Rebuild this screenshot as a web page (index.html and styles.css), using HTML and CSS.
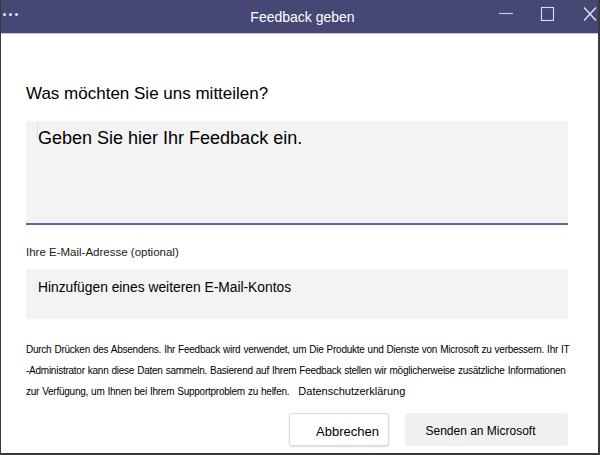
FILE: index.html
```html
<!DOCTYPE html>
<html lang="de">
<head>
<meta charset="utf-8">
<title>Feedback geben</title>
<link rel="stylesheet" href="styles.css">
</head>
<body>
<div class="window">
  <div class="titlebar">
    <div class="dots"><span></span><span></span><span></span></div>
    <div class="title">Feedback geben</div>
    <div class="controls">
      <svg class="ctl ctl-min" width="16" height="16" viewBox="0 0 16 16"><path d="M1 7.5H15" stroke="#c9c9dc" stroke-width="1.2"/></svg>
      <svg class="ctl ctl-max" width="16" height="16" viewBox="0 0 16 16"><rect x="2.5" y="1.5" width="12" height="13" fill="none" stroke="#dcdcea" stroke-width="1.1"/></svg>
      <svg class="ctl ctl-close" width="16" height="16" viewBox="0 0 16 16"><path d="M2 1.5L14 14.5M14 1.5L2 14.5" stroke="#eeeef5" stroke-width="1.2"/></svg>
    </div>
  </div>
  <div class="content">
    <h1 class="question">Was möchten Sie uns mitteilen?</h1>
    <div class="feedback-box"><span class="caret"></span>Geben Sie hier Ihr Feedback ein.</div>
    <div class="label">Ihre E-Mail-Adresse (optional)</div>
    <div class="email-box">Hinzufügen eines weiteren E-Mail-Kontos</div>
    <div class="disclaimer">
      <span class="line">Durch Drücken des Absendens. Ihr Feedback wird verwendet, um Die Produkte und Dienste von Microsoft zu verbessern. Ihr IT</span>
      <span class="line">-Administrator kann diese Daten sammeln. Basierend auf Ihrem Feedback stellen wir möglicherweise zusätzliche Informationen</span>
      <span class="line">zur Verfügung, um Ihnen bei Ihrem Supportproblem zu helfen. <span class="privacy">Datenschutzerklärung</span></span>
    </div>
    <div class="actions">
      <button class="btn btn-cancel">Abbrechen</button>
      <button class="btn btn-send">Senden an Microsoft</button>
    </div>
  </div>
</div>
</body>
</html>
```
FILE: styles.css
```css
html, body {
  margin: 0;
  padding: 0;
  background: #ffffff;
}
body {
  font-family: "Liberation Sans", Arial, sans-serif;
  color: #000;
}
.window {
  width: 600px;
  height: 455px;
  box-sizing: border-box;
  border-left: 1px solid #3a3a3a;
  border-right: 2px solid #3a3a3a;
  border-bottom: 2px solid #3a3a3a;
  display: flex;
  flex-direction: column;
  overflow: hidden;
}
.titlebar {
  height: 33px;
  background: #464775;
  border-bottom: 1px solid #c5c6dd;
  display: flex;
  align-items: flex-start;
  position: relative;
  flex-shrink: 0;
}
.dots {
  display: flex;
  gap: 3px;
  padding-left: 2px;
  margin-top: 13px;
}
.dots span {
  width: 3px;
  height: 3px;
  background: #e6e6f0;
  border-radius: 50%;
}
.title {
  position: absolute;
  left: 0;
  right: 0;
  padding-left: 6px;
  text-align: center;
  color: #ffffff;
  font-size: 14px;
  top: 9px;
}
.controls {
  margin-left: auto;
  display: flex;
  padding-top: 6px;
}
.ctl-max {
  margin-left: 25px;
}
.ctl-close {
  margin-left: 27px;
}
.content {
  padding: 0 30px 0 25px;
  display: flex;
  flex-direction: column;
}
.question {
  font-size: 17px;
  font-weight: normal;
  margin: 50px 0 0 0;
  line-height: 20px;
}
.feedback-box {
  margin-top: 17px;
  height: 104px;
  background: #f3f3f3;
  border-bottom: 2px solid #6264a7;
  border-radius: 2px 2px 0 0;
  padding: 5px 12px;
  box-sizing: border-box;
  font-size: 18px;
  line-height: 24px;
  position: relative;
}
.caret {
  position: absolute;
  left: 11px;
  top: 2px;
  width: 1px;
  height: 15px;
  background: #dedede;
}
.label {
  font-size: 11.5px;
  margin-top: 20px;
  line-height: 14px;
  color: #1a1a1a;
}
.email-box {
  margin-top: 10px;
  height: 50px;
  background: #f3f3f3;
  border-radius: 2px;
  padding: 10px 12px;
  box-sizing: border-box;
  font-size: 13.8px;
  line-height: 18px;
}
.disclaimer {
  margin: 21px -10px 0 0;
  font-size: 10px;
  line-height: 20.7px;
  letter-spacing: -0.25px;
  word-spacing: 0.5px;
  display: flex;
  flex-direction: column;
}
.line {
  display: block;
  white-space: nowrap;
  height: 20.7px;
}
.privacy {
  font-size: 11px;
  letter-spacing: 0;
  word-spacing: 0;
  margin-left: 6px;
}
.actions {
  display: flex;
  justify-content: flex-end;
  gap: 16px;
  margin-top: 11px;
}
.btn {
  font-family: "Liberation Sans", Arial, sans-serif;
  height: 33px;
  box-sizing: border-box;
  border-radius: 3px;
  cursor: pointer;
  color: #000;
}
.btn-cancel {
  width: 100px;
  background: #ffffff;
  border: 1px solid #d9d9d9;
  box-shadow: 0 1px 2px rgba(0,0,0,0.14);
  font-size: 13px;
  padding: 3px 0 0 26px;
  text-align: left;
}
.btn-send {
  width: 163px;
  background: #f0f0f0;
  border: none;
  font-size: 12px;
  padding: 2px 12px 0 0;
}
```
